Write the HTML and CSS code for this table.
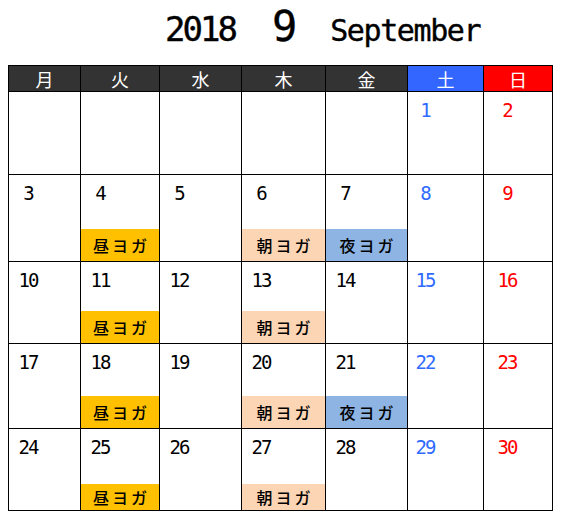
FILE: index.html
```html
<!DOCTYPE html>
<html lang="ja">
<head>
    <meta charset="UTF-8">
    <title>2018 9 September</title>
    <link rel="stylesheet" href="styles.css">
</head>
<body>

<div class="title">
    <span class="year">2018</span>
    <span class="month">9</span>
    <span class="month-name">September</span>
</div>

<div class="calendar">
    <!-- 曜日 -->
    <div class="head">月</div>
    <div class="head">火</div>
    <div class="head">水</div>
    <div class="head">木</div>
    <div class="head">金</div>
    <div class="head sat">土</div>
    <div class="head sun">日</div>

    <!-- 1週目 -->
    <div class="day"></div>
    <div class="day"></div>
    <div class="day"></div>
    <div class="day"></div>
    <div class="day"></div>
    <div class="day sat"><span class="num">1</span></div>
    <div class="day sun"><span class="num">2</span></div>

    <!-- 2週目 -->
    <div class="day"><span class="num">3</span></div>
    <div class="day"><span class="num">4</span><div class="event noon">昼ヨガ</div></div>
    <div class="day"><span class="num">5</span></div>
    <div class="day"><span class="num">6</span><div class="event morning">朝ヨガ</div></div>
    <div class="day"><span class="num">7</span><div class="event night">夜ヨガ</div></div>
    <div class="day sat"><span class="num">8</span></div>
    <div class="day sun"><span class="num">9</span></div>

    <!-- 3週目 -->
    <div class="day"><span class="num">10</span></div>
    <div class="day"><span class="num">11</span><div class="event noon">昼ヨガ</div></div>
    <div class="day"><span class="num">12</span></div>
    <div class="day"><span class="num">13</span><div class="event morning">朝ヨガ</div></div>
    <div class="day"><span class="num">14</span></div>
    <div class="day sat"><span class="num">15</span></div>
    <div class="day sun"><span class="num">16</span></div>

    <!-- 4週目 -->
    <div class="day"><span class="num">17</span></div>
    <div class="day"><span class="num">18</span><div class="event noon">昼ヨガ</div></div>
    <div class="day"><span class="num">19</span></div>
    <div class="day"><span class="num">20</span><div class="event morning">朝ヨガ</div></div>
    <div class="day"><span class="num">21</span><div class="event night">夜ヨガ</div></div>
    <div class="day sat"><span class="num">22</span></div>
    <div class="day sun"><span class="num">23</span></div>

    <!-- 5週目 -->
    <div class="day"><span class="num">24</span></div>
    <div class="day"><span class="num">25</span><div class="event noon short">昼ヨガ</div></div>
    <div class="day"><span class="num">26</span></div>
    <div class="day"><span class="num">27</span><div class="event morning short">朝ヨガ</div></div>
    <div class="day"><span class="num">28</span></div>
    <div class="day sat"><span class="num">29</span></div>
    <div class="day sun"><span class="num">30</span></div>
</div>

</body>
</html>
```

FILE: styles.css
```css
body {
    margin: 8px;
    background-color: white;
    font-family: "Noto Sans CJK JP", sans-serif;
    color: black;
}

/* タイトル */
.title {
    display: flex;
    align-items: baseline;
    height: 57px;
    padding-left: 157px;
    font-family: "DejaVu Sans Mono", monospace;
    line-height: 38px;
    box-sizing: border-box;
    -webkit-text-stroke: 0.4px black;
}
.year {
    font-size: 34px;
    letter-spacing: -3px;
}
.month {
    font-size: 42px;
    margin-left: 37px;
}
.month-name {
    font-size: 30px;
    letter-spacing: -1.4px;
    margin-left: 33px;
}

/* カレンダー */
.calendar {
    display: grid;
    grid-template-columns: 71px 78px 81px 83px 81px 75px 68px;
    grid-template-rows: 25px 82px 86px 81px 84px 81px;
    gap: 1px;
    padding: 1px;
    width: 545px;
    box-sizing: border-box;
    background-color: black;
}
.head {
    background-color: #333333;
    color: white;
    font-size: 18px;
    line-height: 26px;
    text-align: center;
}
.head.sat {
    background-color: #3366ff;
}
.head.sun {
    background-color: #ff0000;
}
.day {
    display: flex;
    flex-direction: column;
    background-color: white;
}
.num {
    width: 24px;
    margin-left: 7px;
    padding-top: 9px;
    font-family: "DejaVu Sans Mono", monospace;
    font-size: 19px;
    line-height: 19px;
    letter-spacing: -2px;
    text-align: center;
}
.day.sat .num {
    color: #2f6bff;
    margin-left: 5px;
}
.day.sun .num {
    color: #ff0000;
    margin-left: 11px;
}
.event {
    display: flex;
    align-items: center;
    justify-content: center;
    height: 32px;
    margin-top: auto;
    padding-left: 3px;
    font-size: 16px;
    font-weight: 500;
    letter-spacing: 3px;
}
.event.short {
    height: 26px;
}
.noon {
    background-color: #ffc000;
}
.morning {
    background-color: #fcd5b4;
}
.night {
    background-color: #8db4e2;
}
```
